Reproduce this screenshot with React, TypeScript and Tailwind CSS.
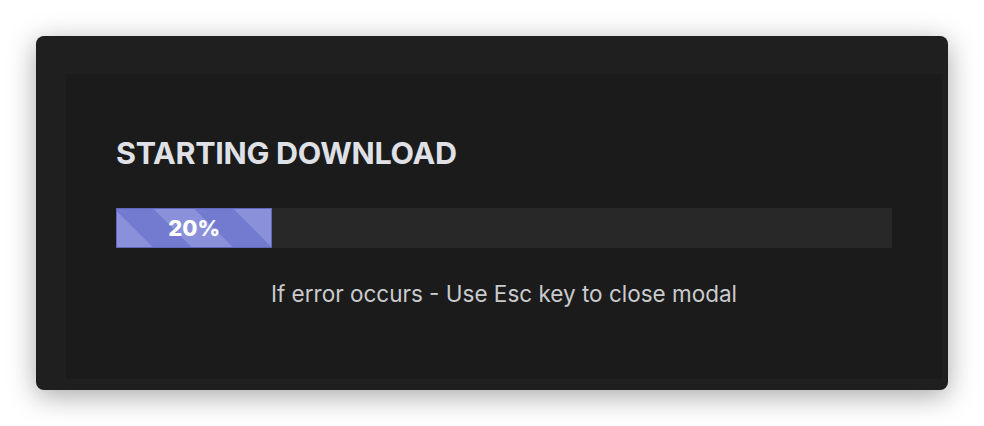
import React from 'react'

const stripes =
  'bg-[repeating-linear-gradient(45deg,#8a91da_0px,#8a91da_24.75px,#737bd0_24.75px,#737bd0_53.03px,#8a91da_53.03px,#8a91da_56.57px)]'

const ProgressBar: React.FC<{ percent: number }> = ({ percent }) => {
  return (
    <div className="w-full h-[40px] bg-[#282828]">
      <div
        className={`h-full flex items-center justify-center border border-[#5f67b8] ${stripes}`}
        style={{ width: `calc(${percent}% + 1px)` }}
      >
        <span className="text-white font-extrabold text-[22px] leading-none">{percent}%</span>
      </div>
    </div>
  )
}

const App: React.FC = () => {
  return (
    <div className="w-[984px] h-[426px] bg-white pt-[36px] pl-[36px] font-['Inter','Noto_Sans',sans-serif]">
      <div className="w-[912px] h-[354px] rounded-lg bg-[#1f1f1f] shadow-[0_6px_28px_rgba(0,0,0,0.35)] pt-[38px] pl-[30px] pr-[6px] pb-[11px]">
        <div className="w-full h-full bg-[#1b1b1b] pt-[60px] px-[50px]">
          <h2 className="text-[30.5px] leading-[38px] font-bold text-[#dfe1e6] tracking-[-0.3px]">STARTING DOWNLOAD</h2>
          <div className="mt-[36px]">
            <ProgressBar percent={20} />
          </div>
          <p className="mt-[31px] text-center text-[22.5px] leading-[30px] text-[#c9cbce]">
            If error occurs - Use Esc key to close modal
          </p>
        </div>
      </div>
    </div>
  )
}

export default App
